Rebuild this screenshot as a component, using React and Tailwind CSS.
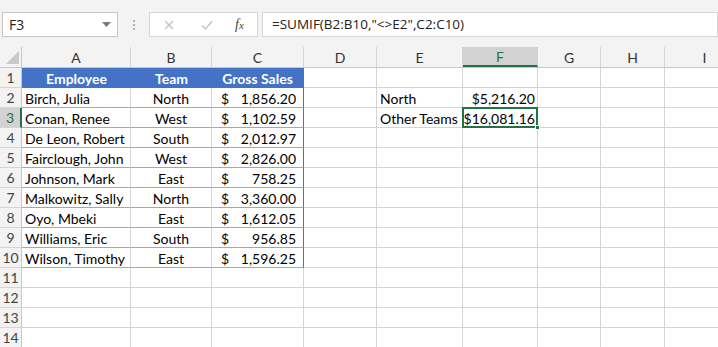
import React from 'react';

const cols = [
  { key: 'A', w: 109 },
  { key: 'B', w: 81 },
  { key: 'C', w: 92 },
  { key: 'D', w: 73 },
  { key: 'E', w: 86 },
  { key: 'F', w: 75 },
  { key: 'G', w: 63 },
  { key: 'H', w: 64 },
  { key: 'I', w: 80 },
];

const data = [
  ['Birch, Julia', 'North', '1,856.20'],
  ['Conan, Renee', 'West', '1,102.59'],
  ['De Leon, Robert', 'South', '2,012.97'],
  ['Fairclough, John', 'West', '2,826.00'],
  ['Johnson, Mark', 'East', '758.25'],
  ['Malkowitz, Sally', 'North', '3,360.00'],
  ['Oyo, Mbeki', 'East', '1,612.05'],
  ['Williams, Eric', 'South', '956.85'],
  ['Wilson, Timothy', 'East', '1,596.25'],
];

const font = { fontFamily: 'Lato, "Open Sans", sans-serif' };

function Toolbar() {
  return (
    <div className="h-[47px] bg-[#f3f3f3] border-t-[12px] border-[#f3f3f3] flex items-start">
      <div className="ml-[2px] w-[116px] h-[25px] bg-white border border-[#c6c6c6] flex items-center justify-between pl-[6px] pr-[6px]">
        <span className="text-[14px] text-[#222]" style={{ fontFamily: '"Open Sans", sans-serif' }}>F3</span>
        <svg width="9" height="6" viewBox="0 0 9 6"><path d="M0 0h9L4.5 5z" fill="#7a7a7a" /></svg>
      </div>
      <div className="w-[31px] h-[25px] flex flex-col items-center justify-center gap-[2px]">
        <span className="w-[2px] h-[2px] bg-[#b5b5b5]" />
        <span className="w-[2px] h-[2px] bg-[#b5b5b5]" />
        <span className="w-[2px] h-[2px] bg-[#b5b5b5]" />
      </div>
      <div className="w-[109px] h-[25px] bg-white border border-[#d6d6d6] flex items-center">
        <svg className="ml-[14px]" width="10" height="10" viewBox="0 0 10 10">
          <path d="M1 1l8 8M9 1l-8 8" stroke="#c2c2c2" strokeWidth="1.3" />
        </svg>
        <svg className="ml-[27px]" width="12" height="10" viewBox="0 0 12 10">
          <path d="M1 5.5l3.5 3.5L11 1" stroke="#c2c2c2" strokeWidth="1.3" fill="none" />
        </svg>
        <span className="ml-[22px] italic text-[14px] text-[#444]" style={{ fontFamily: '"Liberation Serif", serif' }}>
          f<span className="text-[11px]">x</span>
        </span>
      </div>
      <div className="ml-[4px] flex-1 h-[25px] bg-white border border-[#d6d6d6] flex items-center pl-[9px]">
        <span className="text-[13.5px] text-[#222]" style={{ fontFamily: '"Open Sans", sans-serif' }}>
          =SUMIF(B2:B10,"&lt;&gt;E2",C2:C10)
        </span>
      </div>
    </div>
  );
}

function HeaderRow() {
  return (
    <div className="flex h-[21px] bg-[#f3f3f3] border-b border-[#c8c8c8]">
      <div className="w-[22px] shrink-0 border-r border-[#c8c8c8] relative">
        <svg className="absolute left-[6px] top-[4px]" width="13" height="13" viewBox="0 0 13 13">
          <path d="M13 0v13H0z" fill="#c9c9c9" />
        </svg>
      </div>
      {cols.map((c) => (
        <div
          key={c.key}
          style={{ width: c.w }}
          className={
            'shrink-0 flex items-center justify-center text-[14px] border-r border-[#d4d4d4] ' +
            (c.key === 'F' ? 'bg-[#d2d2d2] border-b-2 border-b-[#217346] text-[#217346]' : 'text-[#333]')
          }
        >
          {c.key}
        </div>
      ))}
    </div>
  );
}

function Cell({ w, className = '', children }) {
  return (
    <div style={{ width: w }} className={'shrink-0 h-[20px] pt-[1px] border-r border-b flex items-center text-[14px] text-black whitespace-nowrap ' + className}>
      {children}
    </div>
  );
}

function Row({ n, children, selected }) {
  return (
    <div className="flex h-[20px]">
      <div
        className={
          'w-[22px] shrink-0 h-[20px] border-b border-[#d4d4d4] flex items-center justify-center text-[14px] ' +
          (selected ? 'bg-[#d2d2d2] border-r-2 border-r-[#217346] text-[#217346]' : 'bg-[#f3f3f3] border-r border-r-[#c8c8c8] text-[#444]')
        }
      >
        {n}
      </div>
      {children}
    </div>
  );
}

function Blank({ from }) {
  return cols.slice(from).map((c) => <Cell key={c.key} w={c.w} className="border-[#d4d4d4]" />);
}

export default function App() {
  return (
    <div className="w-[718px] h-[347px] overflow-hidden bg-white" style={font}>
      <Toolbar />
      <HeaderRow />
      <Row n={1}>
        <div className="flex h-[20px] pt-[1px] bg-[#4472c4] text-white font-bold text-[14px] border-b border-r border-[#4472c4]">
          <div className="w-[109px] flex items-center justify-center">Employee</div>
          <div className="w-[81px] flex items-center justify-center">Team</div>
          <div className="w-[91px] flex items-center justify-center">Gross Sales</div>
        </div>
        <Blank from={3} />
      </Row>
      {data.map((r, i) => (
        <Row key={i} n={i + 2} selected={i === 1}>
          <Cell w={109} className="border-r-[#d4d4d4] border-b-[#8eaadb] pl-[3px]">{r[0]}</Cell>
          <Cell w={81} className="border-r-[#d4d4d4] border-b-[#8eaadb] justify-center">{r[1]}</Cell>
          <Cell w={92} className="border-r-[#4472c4] border-b-[#8eaadb] justify-between pl-[9px] pr-[7px]">
            <span>$</span>
            <span>{r[2]}</span>
          </Cell>
          <Cell w={73} className="border-[#d4d4d4]" />
          {i === 0 && (
            <>
              <Cell w={86} className="border-[#d4d4d4] pl-[3px]">North</Cell>
              <Cell w={75} className="border-[#d4d4d4] justify-end pr-[2px]">$5,216.20</Cell>
            </>
          )}
          {i === 1 && (
            <>
              <Cell w={86} className="border-[#d4d4d4] pl-[3px]">Other Teams</Cell>
              <div className="w-[75px] shrink-0 h-[20px] relative border-r border-b border-[#d4d4d4]">
                <div className="absolute -left-[1px] -top-[1px] w-[76px] h-[21px] pt-[1px] border-2 border-[#217346] flex items-center justify-end pr-[1px] text-[14px] text-black">
                  $16,081.16
                </div>
                <div className="absolute -right-[3px] -bottom-[3px] w-[5px] h-[5px] bg-[#217346] border border-white" />
              </div>
            </>
          )}
          {i > 1 && <Blank from={4} />}
          {i <= 1 && <Blank from={6} />}
        </Row>
      ))}
      {[11, 12, 13, 14].map((n) => (
        <Row key={n} n={n}>
          <Blank from={0} />
        </Row>
      ))}
    </div>
  );
}
